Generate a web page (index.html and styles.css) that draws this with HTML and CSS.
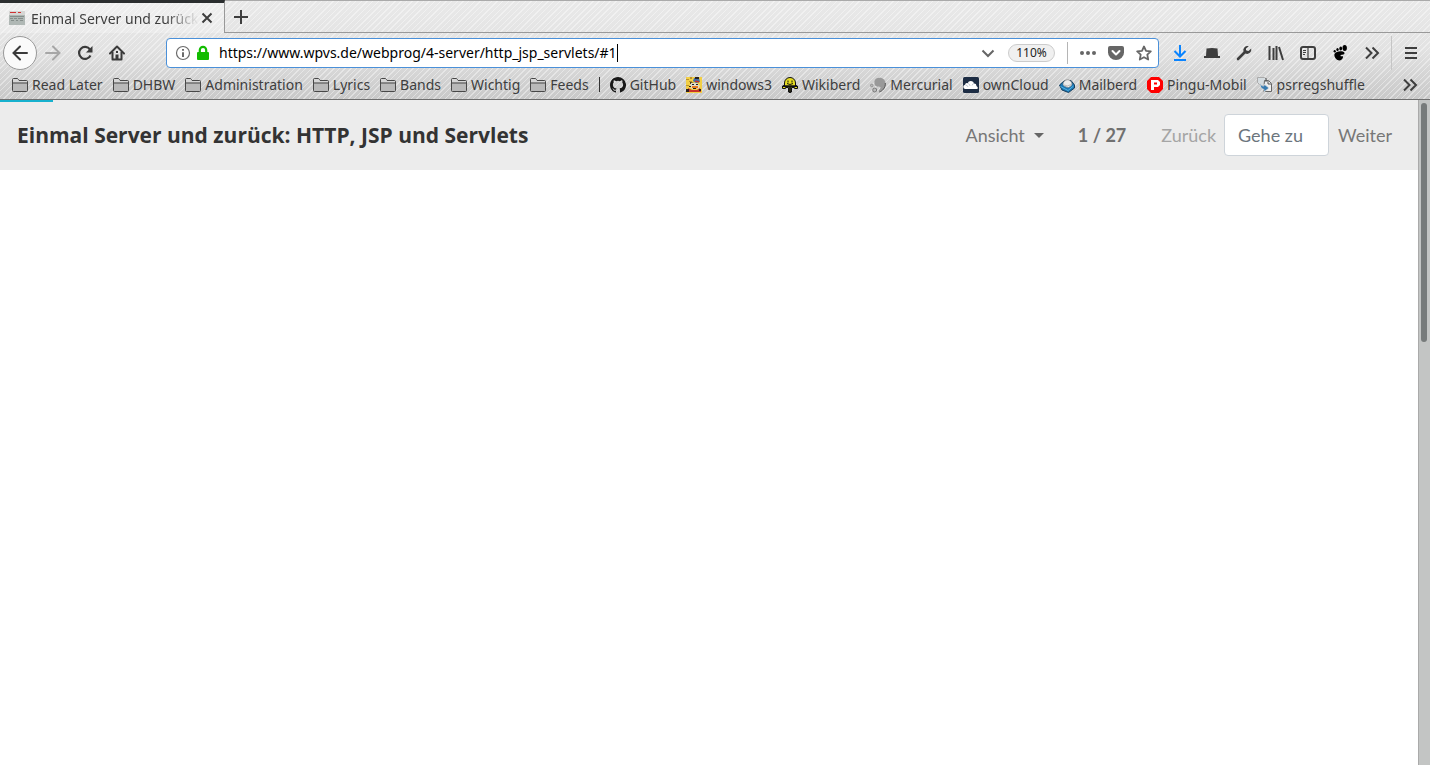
FILE: index.html
```html
<!DOCTYPE html>
<html lang="de">
<head>
<meta charset="utf-8">
<title>Einmal Server und zurück: HTTP, JSP und Servlets</title>
<link rel="stylesheet" href="styles.css">
</head>
<body>
<svg class="defs" aria-hidden="true">
  <symbol id="folder" viewBox="0 0 16 16"><path d="M.5 13.500V2.500q0-1 1-1H5.500l1.500 2h7.500q1 0 1 1v9q0 1-1 1h-13q-1 0-1-1z" fill="#b9b9b9" stroke="#484848"/><path d="M1 5.500V2h4.500l1.500 2h8v1.500H1z" fill="#d6d6d6"/><path d="M1 6h14" stroke="#484848"/></symbol>
  <symbol id="chevrons" viewBox="0 0 16 16"><path d="M2 2.500L7.500 8 2 13.500M8.500 2.500L14 8l-5.500 5.500" fill="none" stroke="#3e3e3e" stroke-width="2"/></symbol>
</svg>
<div class="browser">
  <header class="chrome">
    <div class="tabs">
      <div class="tab">
        <svg class="icon" viewBox="0 0 16 16"><path fill="#b0b8b5" d="M0 1h16v14H0z"/><path fill="#d6d6d4" d="M0 1h16v4H0z"/><path stroke="#cf3333" d="M1 2.500h6M9 2.500h3"/><path stroke="#858e8b" d="M1 6.500h14M1 8.500h3M5 8.500h3M9 8.500h5M2 10.500h3M7 10.500h2M11 10.500h3"/></svg>
        <span class="tab-title">Einmal Server und zurück</span>
        <button class="tool close" aria-label="Tab schließen"><svg class="icon" viewBox="0 0 16 16"><path d="M3.500 3.500l9 9M12.500 3.500l-9 9" stroke="#3e3e3e" stroke-width="2"/></svg></button>
      </div>
      <div class="tab-space"><button class="tool" aria-label="Neuer Tab"><svg class="icon" viewBox="0 0 16 16"><path d="M8 1v14M1 8h14" stroke="#3e3e3e" stroke-width="2"/></svg></button></div>
    </div>
    <div class="navbar">
      <div class="nav-left">
        <button class="tool back" aria-label="Zurück"><svg class="icon" viewBox="0 0 16 16"><path d="M15 8H2M8 1.500L1.500 8 8 14.500" fill="none" stroke="#3a3a3a" stroke-width="2" stroke-linecap="round"/></svg></button>
        <button class="tool" aria-label="Vorwärts"><svg class="icon" viewBox="0 0 16 16"><path d="M1 8h13M8 1.500L14.500 8 8 14.500" fill="none" stroke="#a6a6a6" stroke-width="2" stroke-linecap="round"/></svg></button>
        <button class="tool" aria-label="Neu laden"><svg class="icon" viewBox="0 0 16 16"><path d="M13.500 10.500A6 6 0 1 1 13 4.500" fill="none" stroke="#3a3a3a" stroke-width="2.200"/><path d="M15.500 1v6.500H9z" fill="#3a3a3a"/></svg></button>
        <button class="tool" aria-label="Startseite"><svg class="icon" viewBox="0 0 16 16"><path d="M1 8.500L8 1.500l7 7" fill="none" stroke="#3a3a3a" stroke-width="2" stroke-linecap="round" stroke-linejoin="round"/><path d="M3.500 7v7.500h9V7" fill="none" stroke="#3a3a3a" stroke-width="2" stroke-linejoin="round"/><path fill="#3a3a3a" d="M6.500 9.500h3V14h-3zM7 6h2v2H7z"/></svg></button>
      </div>
      <div class="urlbar">
        <svg class="icon" viewBox="0 0 16 16"><circle cx="8" cy="8" r="6.500" fill="none" stroke="#6b6b6b" stroke-width="1.200"/><path stroke="#6b6b6b" stroke-width="2" d="M8 4v1.800M8 7.200V12"/></svg>
        <svg class="icon lock" viewBox="0 0 16 16"><rect x="2" y="7" width="12" height="8" rx="1" fill="#12bc00"/><path d="M4.800 8V5a3.200 3.200 0 0 1 6.400 0v3" fill="none" stroke="#12bc00" stroke-width="2.200"/></svg>
        <div class="address"><input class="url" aria-label="Adresse" value="https://www.wpvs.de/webprog/4-server/http_jsp_servlets/#1"><span class="caret"></span></div>
        <button class="tool" aria-label="Verlauf anzeigen"><svg class="icon" viewBox="0 0 16 16"><path d="M2.500 5.500L8 11l5.500-5.500" fill="none" stroke="#666" stroke-width="2"/></svg></button>
        <button class="zoom">110%</button>
        <span class="url-divider"></span>
        <button class="tool" aria-label="Seitenaktionen"><svg class="icon" viewBox="0 0 16 16" fill="#666"><circle cx="2" cy="8" r="2"/><circle cx="8" cy="8" r="2"/><circle cx="14" cy="8" r="2"/></svg></button>
        <button class="tool" aria-label="Pocket"><svg class="icon" viewBox="0 0 16 16"><path fill="#666" d="M2 1h12q2 0 2 2v4.500a8 7.500 0 0 1-16 0V3q0-2 2-2z"/><path d="M4.500 6L8 9.500 11.500 6" fill="none" stroke="#fff" stroke-width="2" stroke-linecap="round" stroke-linejoin="round"/></svg></button>
        <button class="tool" aria-label="Lesezeichen setzen"><svg class="icon" viewBox="0 0 16 16"><path d="M8 1.500l2 4.300 4.800.6-3.500 3.300.9 4.800L8 12.200l-4.200 2.300.9-4.800L1.200 6.400 6 5.800z" fill="none" stroke="#666" stroke-width="1.800" stroke-linejoin="round"/></svg></button>
      </div>
      <div class="nav-right">
        <button class="tool" aria-label="Downloads"><svg class="icon" viewBox="0 0 16 16"><path d="M8 0v11M2.500 6L8 11.500 13.500 6M2 15h12" fill="none" stroke="#0a84ff" stroke-width="2"/></svg></button>
        <button class="tool" aria-label="Hut"><svg class="icon" viewBox="0 0 16 16"><path fill="#3e3e3e" d="M2.500 3.500q5.500-1 11 0L14 11h2v2H0v-2h2z"/></svg></button>
        <button class="tool" aria-label="Werkzeuge"><svg class="icon" viewBox="0 0 16 16"><path d="M2 14l7.500-7.500" stroke="#3e3e3e" stroke-width="2.600" stroke-linecap="round"/><path d="M12.800 1.200A4.200 4.200 0 0 0 7.500 6.500l2 2a4.200 4.200 0 0 0 5.700-4.900L12.500 6 10 5.500V3.500z" fill="#3e3e3e"/></svg></button>
        <button class="tool" aria-label="Bibliothek"><svg class="icon" viewBox="0 0 16 16"><path d="M1.500 1v14M5.500 3v12M8.500 1v14M11 2l4 13" stroke="#3e3e3e" stroke-width="2"/></svg></button>
        <button class="tool" aria-label="Seitenleiste"><svg class="icon" viewBox="0 0 16 16"><rect x="1" y="2" width="14" height="12" rx="2" fill="none" stroke="#3e3e3e" stroke-width="2"/><path stroke="#3e3e3e" d="M8 2v12M3 5.500h3M3 7.500h3M3 9.500h2" stroke-width="1.200"/></svg></button>
        <button class="tool" aria-label="GNOME"><svg class="icon" viewBox="0 0 16 16"><path d="M2.500 9C4 5.500 13 5.500 12.500 8.500 12 10.500 8.200 9 8.500 10.800c.3 1.300 3-.5 2.500 1.500-.5 3.500-5 4.200-7 1.500C2.800 12.200 2 10.500 2.500 9z"/><ellipse cx="12.700" cy="3" rx="2.200" ry="2.900"/><ellipse cx="8.700" cy="3.500" rx="1.400" ry="2"/><ellipse cx="5.500" cy="4.500" rx="1.200" ry="1.600"/><ellipse cx="2.700" cy="6.200" rx="1.100" ry="1.300"/></svg></button>
        <button class="tool" aria-label="Weitere Werkzeuge"><svg class="icon"><use href="#chevrons"/></svg></button>
        <span class="nav-divider"></span>
        <button class="tool" aria-label="Menü"><svg class="icon" viewBox="0 0 16 16"><path d="M2 3h12M2 8h12M2 13h12" stroke="#3e3e3e" stroke-width="2"/></svg></button>
      </div>
    </div>
    <nav class="bookmarks" aria-label="Lesezeichen">
      <a href="#"><svg class="icon"><use href="#folder"/></svg>Read Later</a>
      <a href="#"><svg class="icon"><use href="#folder"/></svg>DHBW</a>
      <a href="#"><svg class="icon"><use href="#folder"/></svg>Administration</a>
      <a href="#"><svg class="icon"><use href="#folder"/></svg>Lyrics</a>
      <a href="#"><svg class="icon"><use href="#folder"/></svg>Bands</a>
      <a href="#"><svg class="icon"><use href="#folder"/></svg>Wichtig</a>
      <a href="#"><svg class="icon"><use href="#folder"/></svg>Feeds</a>
      <span class="separator"></span>
      <a href="#"><svg class="icon" viewBox="0 0 16 16"><path fill="#181818" d="M8 0C3.580 0 0 3.580 0 8c0 3.540 2.290 6.530 5.470 7.590.4.070.55-.17.55-.38v-1.490c-2.230.48-2.700-.94-2.700-.94-.36-.92-.89-1.170-.89-1.170-.73-.5.050-.48.050-.48.8.050 1.230.82 1.230.82.72 1.220 1.870.87 2.330.66.070-.52.280-.87.510-1.070-1.780-.2-3.640-.89-3.640-3.950 0-.87.310-1.590.82-2.150-.08-.2-.36-1.020.08-2.120 0 0 .67-.21 2.200.82a7.600 7.600 0 0 1 4 0c1.530-1.040 2.200-.82 2.200-.82.44 1.100.16 1.920.08 2.120.51.560.82 1.270.82 2.150 0 3.070-1.870 3.750-3.650 3.950.29.250.54.730.54 1.480v2.190c0 .21.150.46.550.38A8 8 0 0 0 8 0z"/></svg>GitHub</a>
      <a href="#"><svg class="icon" viewBox="0 0 16 16"><path fill="#f2cf45" d="M0 0h16v16H0z"/><path fill="#b98f2d" d="M0 2h3v1H0zM3 4h3v1H3zM0 8h3v1H0zM4 0h2v2H4z"/><path fill="#3f6fae" d="M8 1h5l1 4-4 1-3-2z"/><path fill="#c8342a" d="M9 3.500l4 .5v1.500l-4-.5zM2 11l4 2h5l3-2 1 4H3z"/><path fill="#2b211d" d="M9 0h4v2H9zM4 5l4 1v1H4zM0 12h3v3H0zM13 12h2v2h-2z"/><path fill="#e2dacb" d="M5 6h6l3 3-2 3H6L4 9z"/><path fill="#e87a20" d="M6 9h6v2l-3 1-3-1z"/><path stroke="#222" d="M6 7.500h2M10 7.500h2M3 9.500h2M7 11.500h3"/></svg>windows3</a>
      <a href="#"><svg class="icon" viewBox="0 0 16 16"><path d="M2.500 9V6a5.500 5.500 0 0 1 11 0v3h2v2.500h-3v-1H9.500V15h-3v-4.500h-3v1h-3V9z" fill="#e6dc20" stroke="#111"/><path d="M1 9.200h14M8 10v6" stroke="#111" stroke-width="1.800"/><path stroke="#111" d="M6 3.500v2M10 3.500v2M5 6.500q3 2 6 0" fill="none"/></svg>Wikiberd</a>
      <a href="#"><svg class="icon" viewBox="0 0 16 16"><path d="M4.500 4C6-1 15 0 15.500 6S10 15.500 9 14.500s2-2.500 1.500-4-4.500 0-5.500-2.500c-.6-1.500-.8-2.500-.5-4z" fill="#999"/><path d="M15.300 6c.5 5-3.500 8.500-6 9" stroke="#555" fill="none"/><circle cx="1.700" cy="8.500" r="1.300" fill="#bbb" stroke="#777" stroke-width=".6"/><circle cx="4.700" cy="13" r="2" fill="#bbb" stroke="#666" stroke-width=".8"/></svg>Mercurial</a>
      <a href="#"><svg class="icon" viewBox="0 0 16 16"><rect width="16" height="16" rx="1.500" fill="#1d2d44"/><path d="M2 12a2.200 2.200 0 0 1 0-4.300 2 2 0 0 1 2.700-1.400 3.300 3.300 0 0 1 6.400.3 2.400 2.400 0 0 1 2.400 2.400q2 .8 1 3z" fill="#fff"/><path d="M5 6.500q2 .5 2 2.500M11 6.500q-1.500 0-2 2M2.500 8q2 0 2.500 2" fill="none" stroke="#9ca7b5" stroke-width=".6"/></svg>ownCloud</a>
      <a href="#"><svg class="icon" viewBox="0 0 16 16"><path d="M.5 8L5 4l7-.5L15.500 8v3L9.500 15.500 3 13z" fill="#1b77b4" stroke="#173e5d"/><path d="M1.500 9.500l7.500 4 5.500-4.500" fill="none" stroke="#54b5e5"/><path d="M4 7.500A4.500 4.500 0 1 1 13 7q0 2-3.500 3.500Q5 10 4 7.500z" fill="#ebebeb" stroke="#777" stroke-width=".6"/><path d="M5 8q3 2 7.500-.5" fill="none" stroke="#bbb"/></svg>Mailberd</a>
      <a href="#"><svg class="icon" viewBox="0 0 16 16"><path fill="#f00" d="M4 0h8l4 4v8l-4 4H4l-4-4V4z"/><path fill="#fff" fill-rule="evenodd" d="M4 3h7l2 2v3l-2 2H7v3H4zM7 5.500v2h3v-2z"/></svg>Pingu-Mobil</a>
      <a href="#"><svg class="icon" viewBox="0 0 16 16"><path d="M.5.500h7l2 2v6h-6l-3-3z" fill="#d5dce0" stroke="#aaa"/><path d="M7.500 3.500h4l3 3v8h-8z" fill="#eee" stroke="#666"/><path d="M3 4q0 5 4 5V7l5 4-5 4v-2.500Q2.500 12 3 4z" fill="#387bb0" stroke="#e0e0e0" stroke-width=".8"/><path d="M9 1v4M11 4v3h3" fill="none" stroke="#555"/></svg>psrregshuffle</a>
      <button class="tool more" aria-label="Weitere Lesezeichen"><svg class="icon"><use href="#chevrons"/></svg></button>
    </nav>
  </header>
  <div class="viewport">
    <main class="page">
      <div class="progress"></div>
      <div class="slide-bar">
        <h1>Einmal Server und zurück: HTTP, JSP und Servlets</h1>
        <button class="view">Ansicht<span class="triangle"></span></button>
        <strong class="count">1 / 27</strong>
        <a class="previous" href="#">Zurück</a>
        <input class="goto" aria-label="Gehe zu" placeholder="Gehe zu">
        <a class="next" href="#">Weiter</a>
      </div>
    </main>
    <div class="scrollbar"><div class="thumb"></div></div>
  </div>
</div>
</body>
</html>
```
FILE: styles.css
```css
* { box-sizing: border-box; }
body { margin: 0; background: #fff; font-family: "Noto Sans", sans-serif; font-size: 14px; color: #3e3e3e; }
button, input { font: inherit; color: inherit; }
button { padding: 0; border: 0; background: none; }
a { color: inherit; text-decoration: none; }
.defs { position: absolute; width: 0; height: 0; }
.browser { display: flex; flex-direction: column; min-height: 100vh; }
.icon { display: block; flex: none; width: 16px; height: 16px; }
.tool { display: flex; flex: none; align-items: center; justify-content: center; }

.chrome {
  border-bottom: 1px solid #6e6e6e;
  background: repeating-linear-gradient(135deg, rgba(255,255,255,.4) 0 1px, transparent 1px 4px), linear-gradient(#e9e9e9, #e2e2e2 50%, #c8c8c8);
}
.tabs { display: flex; height: 33px; }
.tab { display: flex; align-items: center; width: 225px; padding: 0 9px; border-top: 3px solid #2b2e2f; border-right: 1px solid #999; background: rgba(255,255,255,.25); }
.tab-title { flex: 1; min-width: 0; margin: 0 0 0 6px; white-space: nowrap; mask-image: linear-gradient(to right, #000 80%, transparent); }
.tab-space { display: flex; flex: 1; align-items: center; padding-left: 8px; border-top: 1px solid #aaa; border-bottom: 1px solid #999; }

.navbar { display: flex; align-items: center; height: 39px; padding-left: 3px; }
.nav-left { display: flex; align-items: center; gap: 16px; width: 163px; }
.back { width: 34px; height: 34px; margin-right: -8px; border: 1px solid #999; border-radius: 50%; background: #fafafa; }
.urlbar { display: flex; flex: 1; align-items: center; gap: 12px; height: 30px; padding: 0 6px 0 8px; border: 1px solid #4a90d9; border-radius: 4px; background: #fff; }
.lock { margin-left: -8px; }
.address { display: flex; flex: 1; align-items: center; min-width: 0; margin-left: -4px; }
.url { field-sizing: content; min-width: 0; padding: 0; border: 0; outline: 0; background: none; color: #000; }
.caret { width: 1px; height: 18px; background: #000; }
.zoom { width: 47px; height: 18px; border: 1px solid #ccc; border-radius: 9px; background: #f0f0f0; color: #222; font-size: 12px; line-height: 16px; }
.url-divider { width: 1px; height: 22px; background: #b5b5b5; }
.nav-right { display: flex; align-items: center; gap: 16px; padding: 0 11px 0 13px; }
.nav-divider { width: 1px; height: 34px; margin: 0 -5px; background: #c5c5c5; }

.bookmarks { display: flex; align-items: center; gap: 10px; height: 27px; padding: 0 12px 2px; white-space: nowrap; }
.bookmarks a { display: flex; align-items: center; gap: 4px; line-height: 20px; }
.separator { flex: none; width: 1px; height: 15px; background: #333; }
.bookmarks .more { margin: 0 0 0 auto; }

.viewport { display: flex; flex: 1; }
.page { flex: 1; min-width: 0; }
.progress { position: absolute; width: 53px; height: 2px; background: #17b1ce; }
.slide-bar { display: flex; align-items: center; height: 70px; padding: 0 26px 0 17px; background: #ececec; color: #777; font-family: Lato, sans-serif; font-size: 18px; }
h1 { flex: 1; margin: 0; color: #333; font-family: "Open Sans", sans-serif; font-size: 21px; font-weight: 700; }
.view { display: flex; align-items: center; gap: 9px; margin-right: 34px; }
.triangle { border: 5px solid transparent; border-top-color: #666; border-bottom: 0; }
.count { margin-right: 35px; color: #707070; }
.previous { color: #a5a5a5; }
.goto { width: 105px; height: 42px; margin: 0 9px 0 8px; padding: 0 13px; border: 1px solid #ced4da; border-radius: 4px; background: #fff; }
.goto::placeholder { color: #6c757d; opacity: 1; }
.scrollbar { width: 12px; padding: 3px 2px; border-left: 1px solid #aaa; background: #c3c5c4; }
.thumb { width: 6px; height: 239px; border-radius: 3px; background: #777b7b; }
```
